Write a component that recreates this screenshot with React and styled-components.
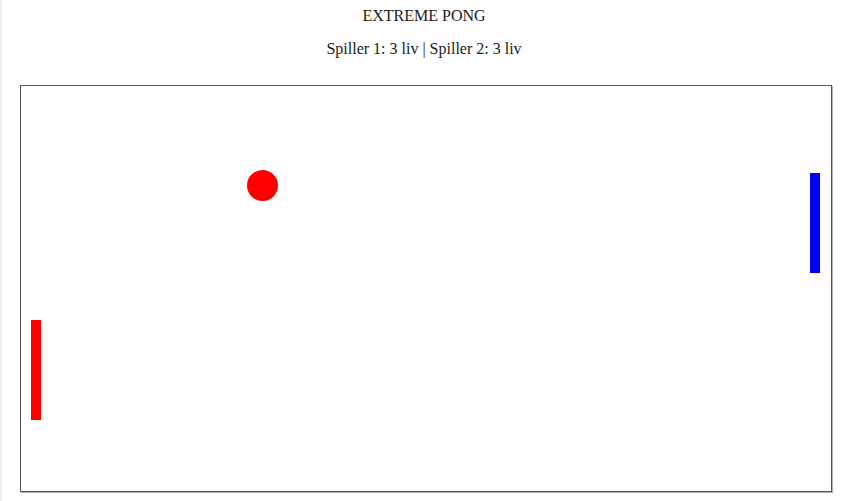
import React from 'react'
import styled, { createGlobalStyle } from 'styled-components'

const GlobalStyle = createGlobalStyle`
  html, body {
    margin: 0;
    padding: 0;
    background: #fff;
  }
  body {
    font-family: 'Liberation Serif', 'Times New Roman', serif;
    color: #1a1a1a;
  }
`

const Page = styled.div`
  min-height: 100vh;
  box-shadow: inset 2px 0 #ececec;
  padding-top: 7px;
  display: flex;
  flex-direction: column;
  align-items: center;
`

const Title = styled.div`
  font-size: 16px;
  line-height: 18px;
  text-align: center;
`

const Score = styled.div`
  margin-top: 15px;
  font-size: 16px;
  line-height: 18px;
  text-align: center;
`

const Board = styled.div`
  position: relative;
  align-self: flex-start;
  margin: 27px 0 0 20px;
  width: 810px;
  height: 405px;
  border: 1px solid #555;
  box-shadow: 1px 1px 0 #b0b0b0;
  background: #fff;
  overflow: hidden;
`

const Paddle = styled.div`
  position: absolute;
  width: 10px;
  height: 100px;
  background: ${p => p.color};
`

const Ball = styled.div`
  position: absolute;
  width: 31px;
  height: 31px;
  border-radius: 50%;
  background: #ff0000;
`

const game = {
  p1: { x: 10, y: 234, lives: 3 },
  p2: { x: 789, y: 87, lives: 3 },
  ball: { x: 241, y: 99, r: 15.5 },
}

export default function App() {
  const { p1, p2, ball } = game
  return (
    <Page>
      <GlobalStyle />
      <Title>EXTREME PONG</Title>
      <Score>
        Spiller 1: {p1.lives} liv | Spiller 2: {p2.lives} liv
      </Score>
      <Board>
        <Paddle color="#ff0000" style={{ left: p1.x, top: p1.y }} />
        <Paddle color="#0000ff" style={{ left: p2.x, top: p2.y }} />
        <Ball style={{ left: ball.x - ball.r, top: ball.y - ball.r }} />
      </Board>
    </Page>
  )
}
